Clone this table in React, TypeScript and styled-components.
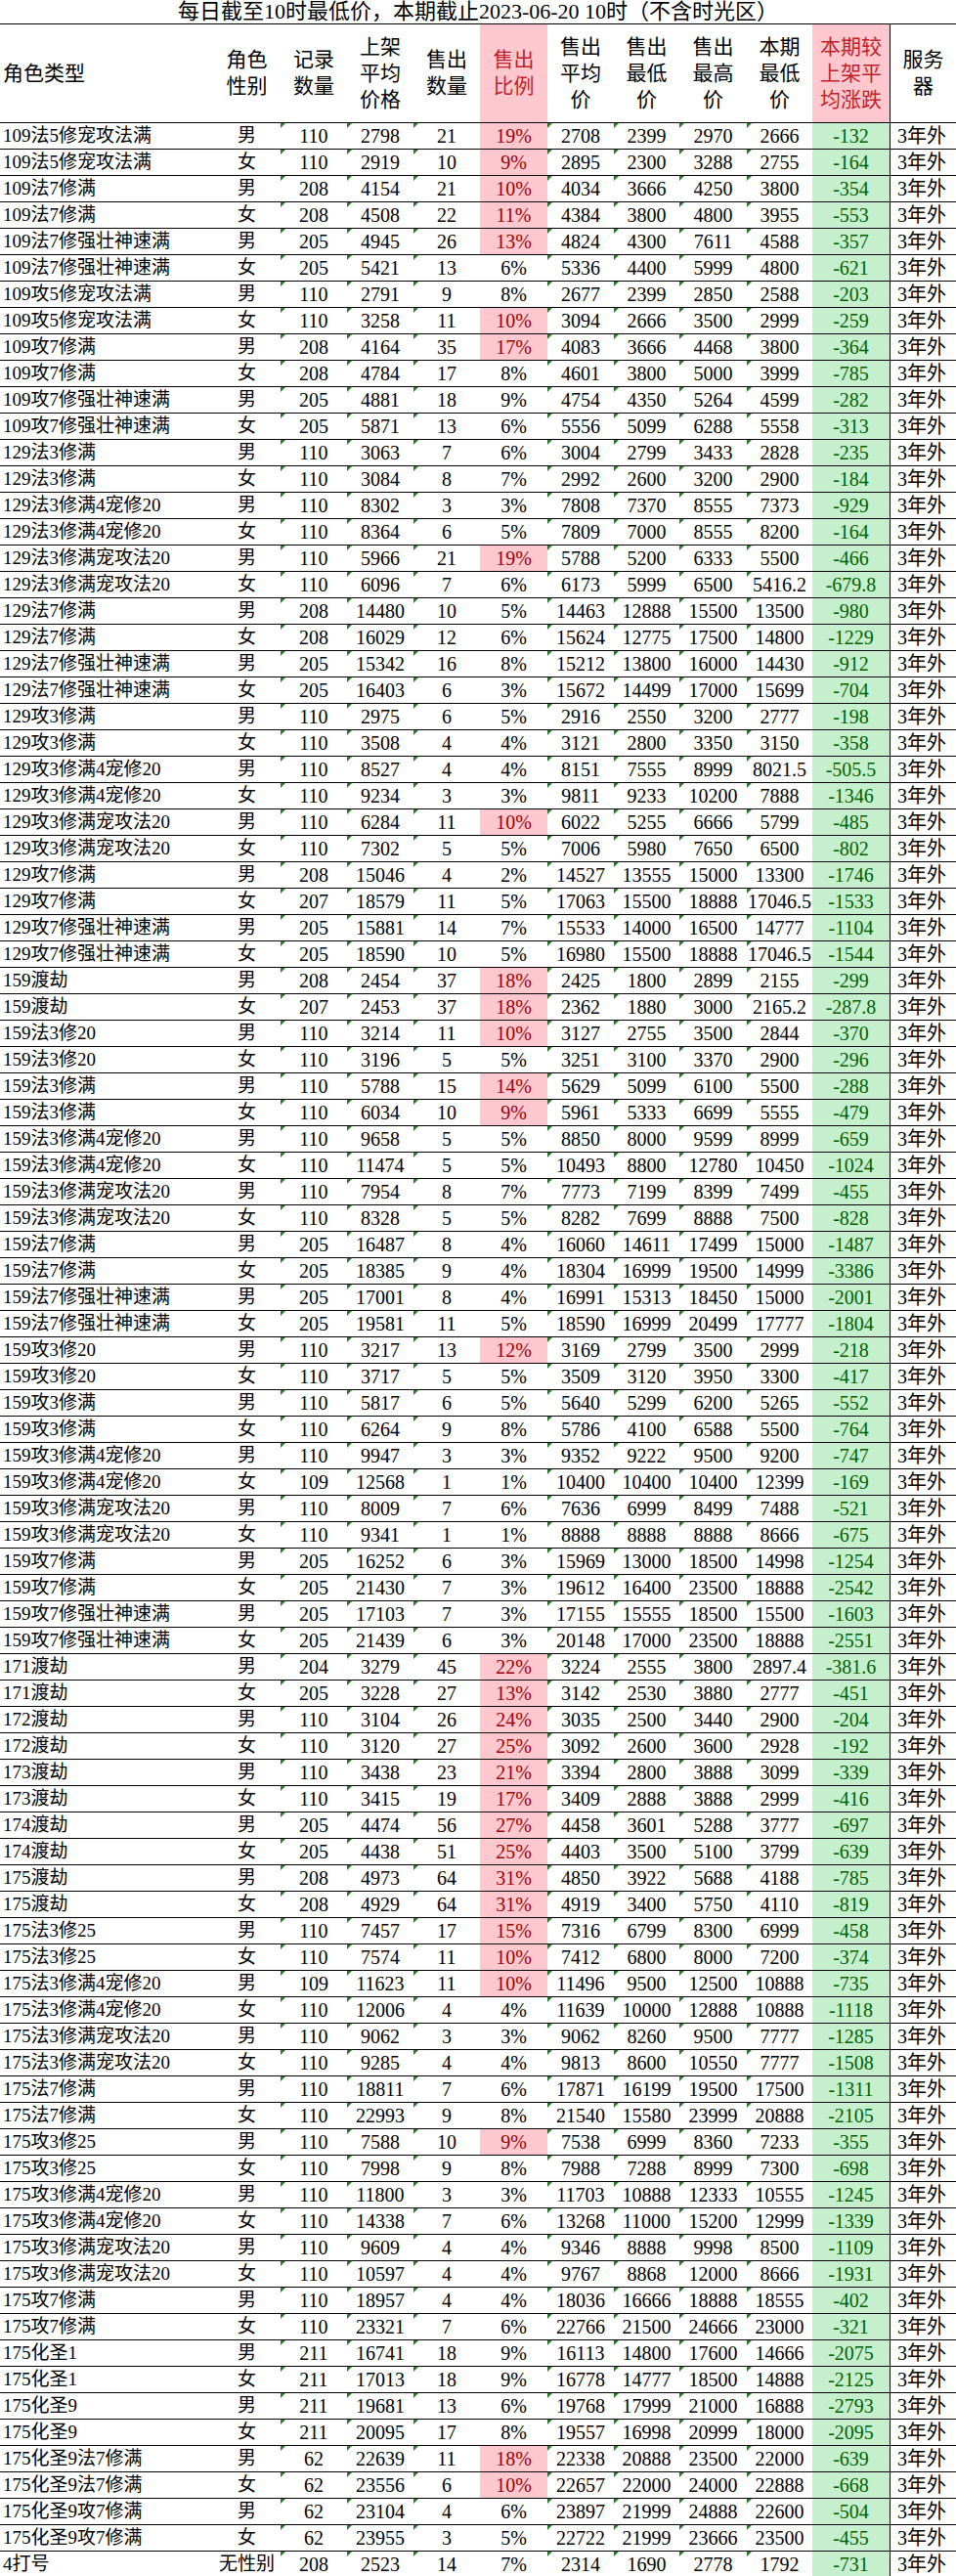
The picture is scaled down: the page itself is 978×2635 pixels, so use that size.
import { createGlobalStyle } from "styled-components";
import styled from "styled-components";

const GlobalStyle = createGlobalStyle`
	body {
		margin: 0;
		background: #ffffff;
		font-family: "Liberation Serif", "Noto Sans CJK SC", serif;
		color: #000;
	}
`;

const COLS = "218px 69px 68px 68px 68px 69px 68px 67px 69px 67px 79px 68px";

const Sheet = styled.div`
	width: 978px;
	background: #ffffff;
`;

const Title = styled.div`
	height: 25px;
	box-sizing: border-box;
	border-bottom: 1px solid #000;
	font-size: 22px;
	line-height: 24px;
	text-align: center;
	white-space: nowrap;
	overflow: hidden;
`;

const HeaderRow = styled.div`
	display: grid;
	grid-template-columns: ${COLS};
	height: 101px;
	box-sizing: border-box;
	border-bottom: 1px solid #000;
`;

const HeaderCell = styled.div<{ $left?: boolean; $hot?: boolean; $rule?: boolean }>`
	display: flex;
	align-items: center;
	justify-content: ${(p) => (p.$left ? "flex-start" : "center")};
	padding-left: ${(p) => (p.$left ? "3px" : "0")};
	font-size: 21px;
	line-height: 27px;
	text-align: center;
	background-color: ${(p) => (p.$hot ? "#ffc7ce" : "transparent")};
	color: ${(p) => (p.$hot ? "#bf1f2c" : "#000")};
	border-left: ${(p) => (p.$rule ? "1px solid #000" : "none")};
`;

const Row = styled.div`
	display: grid;
	grid-template-columns: ${COLS};
	height: 27px;
	box-sizing: border-box;
	border-bottom: 1px solid #000;
`;

type Tone = "pink" | "green" | undefined;

const Cell = styled.div<{ $left?: boolean; $tone?: Tone; $mark?: boolean; $rule?: boolean; $cjk?: boolean }>`
	position: relative;
	overflow: hidden;
	white-space: nowrap;
	font-size: ${(p) => (p.$cjk ? "19px" : "20px")};
	line-height: 26px;
	text-align: ${(p) => (p.$left ? "left" : "center")};
	padding-left: ${(p) => (p.$left ? "3px" : "0")};
	background-color: ${(p) =>
		p.$tone === "pink" ? "#ffc7ce" : p.$tone === "green" ? "#c6efce" : "transparent"};
	color: ${(p) => (p.$tone === "pink" ? "#9c0006" : p.$tone === "green" ? "#006100" : "#000")};
	border-left: ${(p) => (p.$rule ? "1px solid #000" : "none")};

	&::before {
		content: "";
		display: ${(p) => (p.$mark ? "block" : "none")};
		position: absolute;
		top: 0;
		left: 0;
		width: 0;
		height: 0;
		border-top: 5px solid #2b7a2b;
		border-right: 5px solid transparent;
	}
`;

const ServerCell = styled(Cell)`
	text-align: left;
	padding-left: 7px;
	font-size: 20px;
`;

// name, gender, records, listAvg, sold, ratio, soldAvg, soldMin, soldMax, curMin, diff, hot
type Item = [string, string, string, string, string, string, string, string, string, string, string, number];

const rows: Item[] = [
	["109法5修宠攻法满", "男", "110", "2798", "21", "19%", "2708", "2399", "2970", "2666", "-132", 1],
	["109法5修宠攻法满", "女", "110", "2919", "10", "9%", "2895", "2300", "3288", "2755", "-164", 1],
	["109法7修满", "男", "208", "4154", "21", "10%", "4034", "3666", "4250", "3800", "-354", 1],
	["109法7修满", "女", "208", "4508", "22", "11%", "4384", "3800", "4800", "3955", "-553", 1],
	["109法7修强壮神速满", "男", "205", "4945", "26", "13%", "4824", "4300", "7611", "4588", "-357", 1],
	["109法7修强壮神速满", "女", "205", "5421", "13", "6%", "5336", "4400", "5999", "4800", "-621", 0],
	["109攻5修宠攻法满", "男", "110", "2791", "9", "8%", "2677", "2399", "2850", "2588", "-203", 0],
	["109攻5修宠攻法满", "女", "110", "3258", "11", "10%", "3094", "2666", "3500", "2999", "-259", 1],
	["109攻7修满", "男", "208", "4164", "35", "17%", "4083", "3666", "4468", "3800", "-364", 1],
	["109攻7修满", "女", "208", "4784", "17", "8%", "4601", "3800", "5000", "3999", "-785", 0],
	["109攻7修强壮神速满", "男", "205", "4881", "18", "9%", "4754", "4350", "5264", "4599", "-282", 0],
	["109攻7修强壮神速满", "女", "205", "5871", "13", "6%", "5556", "5099", "6288", "5558", "-313", 0],
	["129法3修满", "男", "110", "3063", "7", "6%", "3004", "2799", "3433", "2828", "-235", 0],
	["129法3修满", "女", "110", "3084", "8", "7%", "2992", "2600", "3200", "2900", "-184", 0],
	["129法3修满4宠修20", "男", "110", "8302", "3", "3%", "7808", "7370", "8555", "7373", "-929", 0],
	["129法3修满4宠修20", "女", "110", "8364", "6", "5%", "7809", "7000", "8555", "8200", "-164", 0],
	["129法3修满宠攻法20", "男", "110", "5966", "21", "19%", "5788", "5200", "6333", "5500", "-466", 1],
	["129法3修满宠攻法20", "女", "110", "6096", "7", "6%", "6173", "5999", "6500", "5416.2", "-679.8", 0],
	["129法7修满", "男", "208", "14480", "10", "5%", "14463", "12888", "15500", "13500", "-980", 0],
	["129法7修满", "女", "208", "16029", "12", "6%", "15624", "12775", "17500", "14800", "-1229", 0],
	["129法7修强壮神速满", "男", "205", "15342", "16", "8%", "15212", "13800", "16000", "14430", "-912", 0],
	["129法7修强壮神速满", "女", "205", "16403", "6", "3%", "15672", "14499", "17000", "15699", "-704", 0],
	["129攻3修满", "男", "110", "2975", "6", "5%", "2916", "2550", "3200", "2777", "-198", 0],
	["129攻3修满", "女", "110", "3508", "4", "4%", "3121", "2800", "3350", "3150", "-358", 0],
	["129攻3修满4宠修20", "男", "110", "8527", "4", "4%", "8151", "7555", "8999", "8021.5", "-505.5", 0],
	["129攻3修满4宠修20", "女", "110", "9234", "3", "3%", "9811", "9233", "10200", "7888", "-1346", 0],
	["129攻3修满宠攻法20", "男", "110", "6284", "11", "10%", "6022", "5255", "6666", "5799", "-485", 1],
	["129攻3修满宠攻法20", "女", "110", "7302", "5", "5%", "7006", "5980", "7650", "6500", "-802", 0],
	["129攻7修满", "男", "208", "15046", "4", "2%", "14527", "13555", "15000", "13300", "-1746", 0],
	["129攻7修满", "女", "207", "18579", "11", "5%", "17063", "15500", "18888", "17046.5", "-1533", 0],
	["129攻7修强壮神速满", "男", "205", "15881", "14", "7%", "15533", "14000", "16500", "14777", "-1104", 0],
	["129攻7修强壮神速满", "女", "205", "18590", "10", "5%", "16980", "15500", "18888", "17046.5", "-1544", 0],
	["159渡劫", "男", "208", "2454", "37", "18%", "2425", "1800", "2899", "2155", "-299", 1],
	["159渡劫", "女", "207", "2453", "37", "18%", "2362", "1880", "3000", "2165.2", "-287.8", 1],
	["159法3修20", "男", "110", "3214", "11", "10%", "3127", "2755", "3500", "2844", "-370", 1],
	["159法3修20", "女", "110", "3196", "5", "5%", "3251", "3100", "3370", "2900", "-296", 0],
	["159法3修满", "男", "110", "5788", "15", "14%", "5629", "5099", "6100", "5500", "-288", 1],
	["159法3修满", "女", "110", "6034", "10", "9%", "5961", "5333", "6699", "5555", "-479", 1],
	["159法3修满4宠修20", "男", "110", "9658", "5", "5%", "8850", "8000", "9599", "8999", "-659", 0],
	["159法3修满4宠修20", "女", "110", "11474", "5", "5%", "10493", "8800", "12780", "10450", "-1024", 0],
	["159法3修满宠攻法20", "男", "110", "7954", "8", "7%", "7773", "7199", "8399", "7499", "-455", 0],
	["159法3修满宠攻法20", "女", "110", "8328", "5", "5%", "8282", "7699", "8888", "7500", "-828", 0],
	["159法7修满", "男", "205", "16487", "8", "4%", "16060", "14611", "17499", "15000", "-1487", 0],
	["159法7修满", "女", "205", "18385", "9", "4%", "18304", "16999", "19500", "14999", "-3386", 0],
	["159法7修强壮神速满", "男", "205", "17001", "8", "4%", "16991", "15313", "18450", "15000", "-2001", 0],
	["159法7修强壮神速满", "女", "205", "19581", "11", "5%", "18590", "16999", "20499", "17777", "-1804", 0],
	["159攻3修20", "男", "110", "3217", "13", "12%", "3169", "2799", "3500", "2999", "-218", 1],
	["159攻3修20", "女", "110", "3717", "5", "5%", "3509", "3120", "3950", "3300", "-417", 0],
	["159攻3修满", "男", "110", "5817", "6", "5%", "5640", "5299", "6200", "5265", "-552", 0],
	["159攻3修满", "女", "110", "6264", "9", "8%", "5786", "4100", "6588", "5500", "-764", 0],
	["159攻3修满4宠修20", "男", "110", "9947", "3", "3%", "9352", "9222", "9500", "9200", "-747", 0],
	["159攻3修满4宠修20", "女", "109", "12568", "1", "1%", "10400", "10400", "10400", "12399", "-169", 0],
	["159攻3修满宠攻法20", "男", "110", "8009", "7", "6%", "7636", "6999", "8499", "7488", "-521", 0],
	["159攻3修满宠攻法20", "女", "110", "9341", "1", "1%", "8888", "8888", "8888", "8666", "-675", 0],
	["159攻7修满", "男", "205", "16252", "6", "3%", "15969", "13000", "18500", "14998", "-1254", 0],
	["159攻7修满", "女", "205", "21430", "7", "3%", "19612", "16400", "23500", "18888", "-2542", 0],
	["159攻7修强壮神速满", "男", "205", "17103", "7", "3%", "17155", "15555", "18500", "15500", "-1603", 0],
	["159攻7修强壮神速满", "女", "205", "21439", "6", "3%", "20148", "17000", "23500", "18888", "-2551", 0],
	["171渡劫", "男", "204", "3279", "45", "22%", "3224", "2555", "3800", "2897.4", "-381.6", 1],
	["171渡劫", "女", "205", "3228", "27", "13%", "3142", "2530", "3880", "2777", "-451", 1],
	["172渡劫", "男", "110", "3104", "26", "24%", "3035", "2500", "3440", "2900", "-204", 1],
	["172渡劫", "女", "110", "3120", "27", "25%", "3092", "2600", "3600", "2928", "-192", 1],
	["173渡劫", "男", "110", "3438", "23", "21%", "3394", "2800", "3888", "3099", "-339", 1],
	["173渡劫", "女", "110", "3415", "19", "17%", "3409", "2888", "3888", "2999", "-416", 1],
	["174渡劫", "男", "205", "4474", "56", "27%", "4458", "3601", "5288", "3777", "-697", 1],
	["174渡劫", "女", "205", "4438", "51", "25%", "4403", "3500", "5100", "3799", "-639", 1],
	["175渡劫", "男", "208", "4973", "64", "31%", "4850", "3922", "5688", "4188", "-785", 1],
	["175渡劫", "女", "208", "4929", "64", "31%", "4919", "3400", "5750", "4110", "-819", 1],
	["175法3修25", "男", "110", "7457", "17", "15%", "7316", "6799", "8300", "6999", "-458", 1],
	["175法3修25", "女", "110", "7574", "11", "10%", "7412", "6800", "8000", "7200", "-374", 1],
	["175法3修满4宠修20", "男", "109", "11623", "11", "10%", "11496", "9500", "12500", "10888", "-735", 1],
	["175法3修满4宠修20", "女", "110", "12006", "4", "4%", "11639", "10000", "12888", "10888", "-1118", 0],
	["175法3修满宠攻法20", "男", "110", "9062", "3", "3%", "9062", "8260", "9500", "7777", "-1285", 0],
	["175法3修满宠攻法20", "女", "110", "9285", "4", "4%", "9813", "8600", "10550", "7777", "-1508", 0],
	["175法7修满", "男", "110", "18811", "7", "6%", "17871", "16199", "19500", "17500", "-1311", 0],
	["175法7修满", "女", "110", "22993", "9", "8%", "21540", "15580", "23999", "20888", "-2105", 0],
	["175攻3修25", "男", "110", "7588", "10", "9%", "7538", "6999", "8360", "7233", "-355", 1],
	["175攻3修25", "女", "110", "7998", "9", "8%", "7988", "7288", "8999", "7300", "-698", 0],
	["175攻3修满4宠修20", "男", "110", "11800", "3", "3%", "11703", "10888", "12333", "10555", "-1245", 0],
	["175攻3修满4宠修20", "女", "110", "14338", "7", "6%", "13268", "11000", "15200", "12999", "-1339", 0],
	["175攻3修满宠攻法20", "男", "110", "9609", "4", "4%", "9346", "8888", "9998", "8500", "-1109", 0],
	["175攻3修满宠攻法20", "女", "110", "10597", "4", "4%", "9767", "8868", "12000", "8666", "-1931", 0],
	["175攻7修满", "男", "110", "18957", "4", "4%", "18036", "16666", "18888", "18555", "-402", 0],
	["175攻7修满", "女", "110", "23321", "7", "6%", "22766", "21500", "24666", "23000", "-321", 0],
	["175化圣1", "男", "211", "16741", "18", "9%", "16113", "14800", "17600", "14666", "-2075", 0],
	["175化圣1", "女", "211", "17013", "18", "9%", "16778", "14777", "18500", "14888", "-2125", 0],
	["175化圣9", "男", "211", "19681", "13", "6%", "19768", "17999", "21000", "16888", "-2793", 0],
	["175化圣9", "女", "211", "20095", "17", "8%", "19557", "16998", "20999", "18000", "-2095", 0],
	["175化圣9法7修满", "男", "62", "22639", "11", "18%", "22338", "20888", "23500", "22000", "-639", 1],
	["175化圣9法7修满", "女", "62", "23556", "6", "10%", "22657", "22000", "24000", "22888", "-668", 1],
	["175化圣9攻7修满", "男", "62", "23104", "4", "6%", "23897", "21999", "24888", "22600", "-504", 0],
	["175化圣9攻7修满", "女", "62", "23955", "3", "5%", "22722", "21999", "23666", "23500", "-455", 0],
	["4打号", "无性别", "208", "2523", "14", "7%", "2314", "1690", "2778", "1792", "-731", 0],
];

const headers: { lines: string[]; left?: boolean; hot?: boolean; rule?: boolean }[] = [
	{ lines: ["角色类型"], left: true },
	{ lines: ["角色", "性别"] },
	{ lines: ["记录", "数量"] },
	{ lines: ["上架", "平均", "价格"] },
	{ lines: ["售出", "数量"] },
	{ lines: ["售出", "比例"], hot: true },
	{ lines: ["售出", "平均", "价"] },
	{ lines: ["售出", "最低", "价"] },
	{ lines: ["售出", "最高", "价"] },
	{ lines: ["本期", "最低", "价"] },
	{ lines: ["本期较", "上架平", "均涨跌"], hot: true },
	{ lines: ["服务", "器"], rule: true },
];

function App() {
	return (
		<Sheet>
			<GlobalStyle />
			<Title>每日截至10时最低价，本期截止2023-06-20 10时（不含时光区）</Title>
			<HeaderRow>
				{headers.map((h, i) => (
					<HeaderCell key={i} $left={h.left} $hot={h.hot} $rule={h.rule}>
						<div>
							{h.lines.map((l, j) => (
								<div key={j}>{l}</div>
							))}
						</div>
					</HeaderCell>
				))}
			</HeaderRow>
			{rows.map((r, i) => (
				<Row key={i}>
					<Cell $left $cjk>{r[0]}</Cell>
					<Cell $cjk>{r[1]}</Cell>
					<Cell $mark>{r[2]}</Cell>
					<Cell $mark>{r[3]}</Cell>
					<Cell $mark>{r[4]}</Cell>
					<Cell $tone={r[11] ? "pink" : undefined}>{r[5]}</Cell>
					<Cell $mark>{r[6]}</Cell>
					<Cell $mark>{r[7]}</Cell>
					<Cell $mark>{r[8]}</Cell>
					<Cell $mark>{r[9]}</Cell>
					<Cell $tone="green">{r[10]}</Cell>
					<ServerCell $rule $cjk>3年外</ServerCell>
				</Row>
			))}
		</Sheet>
	);
}

export default App;
